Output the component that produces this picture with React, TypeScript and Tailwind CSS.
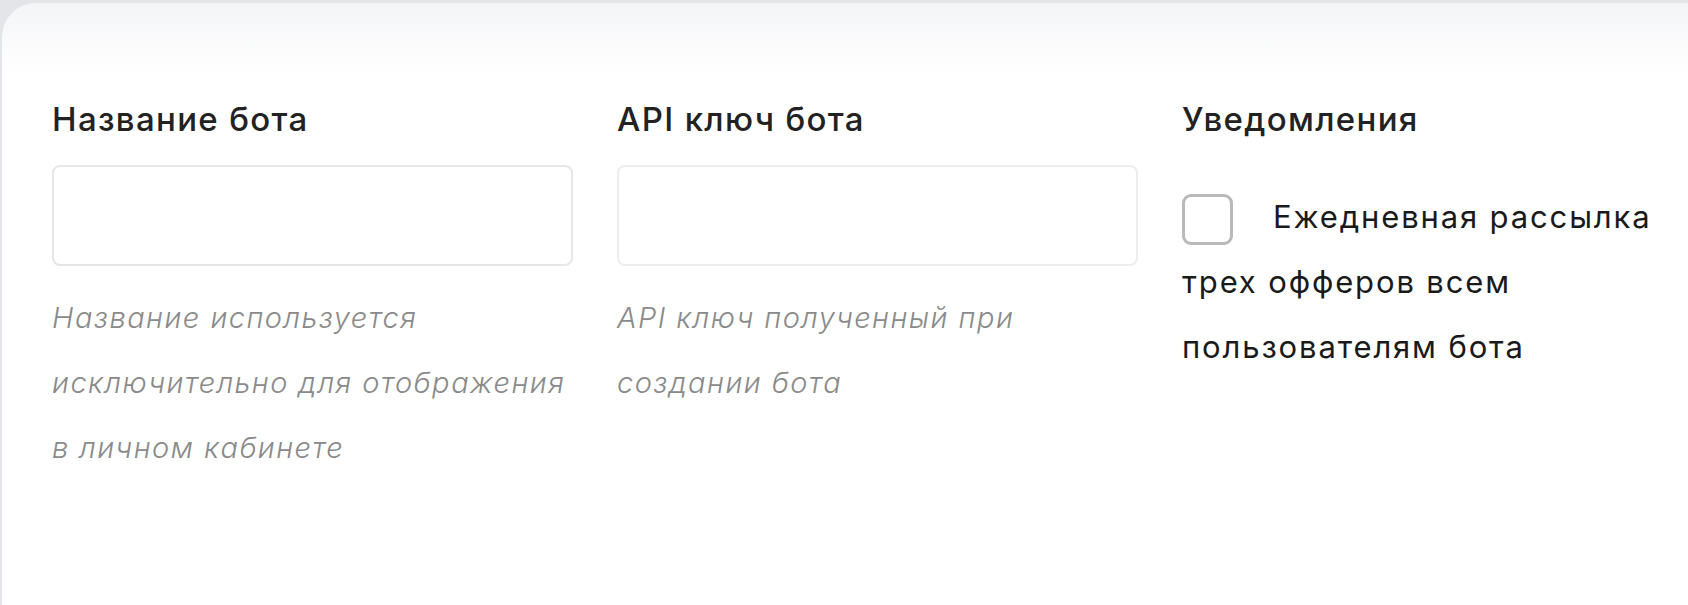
export default function App() {
  return (
    <div className="h-[605px] w-full overflow-hidden bg-[#e4e5e9] pt-[3px] pl-[2px] font-['Inter',sans-serif]">
      <div className="h-full rounded-tl-[34px] bg-[linear-gradient(to_bottom,#f4f5f7_0px,#ffffff_70px)] pt-[97px] pl-[50px]">
        <div className="grid grid-cols-[521px_521px_521px] gap-x-[44px]">
          <div>
            <h3 className="text-[33px] leading-[38px] font-medium tracking-[0.04em] text-[#222222]">Название бота</h3>
            <input
              type="text"
              className="mt-[27px] block h-[101px] w-full rounded-[8px] border-2 border-[#e6e6e6] bg-white outline-none"
            />
            <p className="mt-[19px] text-[29px] leading-[65px] font-light italic tracking-[0.05em] text-[#8a8a8a]">
              Название используется исключительно для отображения в личном кабинете
            </p>
          </div>
          <div>
            <h3 className="text-[33px] leading-[38px] font-medium tracking-[0.04em] text-[#222222]">API ключ бота</h3>
            <input
              type="text"
              className="mt-[27px] block h-[101px] w-full rounded-[8px] border-2 border-[#ededed] bg-white outline-none"
            />
            <p className="mt-[19px] text-[29px] leading-[65px] font-light italic tracking-[0.05em] text-[#8a8a8a]">
              API ключ полученный при создании бота
            </p>
          </div>
          <div>
            <h3 className="text-[33px] leading-[38px] font-medium tracking-[0.04em] text-[#222222]">Уведомления</h3>
            <label className="mt-[46px] block text-[31px] leading-[65px] tracking-[0.06em] text-[#1a1a1a]">
              <span className="mr-[40px] inline-block h-[51px] w-[51px] rounded-[9px] border-[3px] border-[#b9b9b9] bg-white align-middle"></span>
              Ежедневная рассылка трех офферов всем пользователям бота
            </label>
          </div>
        </div>
      </div>
    </div>
  );
}
